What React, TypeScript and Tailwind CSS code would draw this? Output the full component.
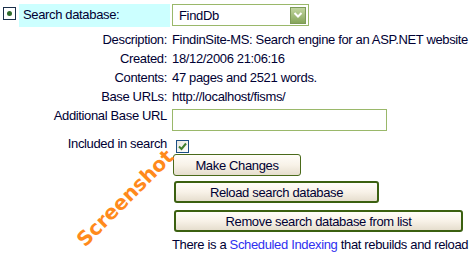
import React from "react";

function Chevron() {
  return (
    <svg width="10" height="8" viewBox="0 0 10 8">
      <path d="M1.5 2 L5 5.5 L8.5 2" stroke="#ffffff" strokeWidth="2" fill="none" />
    </svg>
  );
}

function Check() {
  return (
    <svg width="9" height="9" viewBox="0 0 9 9">
      <path d="M1 4.5 L3.5 7 L8 1.5" stroke="#3f7f2f" strokeWidth="2" fill="none" />
    </svg>
  );
}

export default function App() {
  const btnBase =
    "flex items-center justify-center h-[22px] rounded-[3px] bg-gradient-to-b from-[#fffdf9] via-[#f8f2e8] to-[#e6dece] text-[13px] text-[#000033] leading-none";
  return (
    <div
      className="relative w-[470px] h-[260px] bg-white overflow-hidden text-[13px] tracking-[-0.35px] text-[#000033]"
      style={{ fontFamily: '"Liberation Sans", Arial, sans-serif' }}
    >
      {/* top row */}
      <div className="flex items-start pt-[4px]">
        <div className="ml-[3px] mt-[3px] w-[13px] h-[13px] border border-[#1b2f4a] bg-white flex items-center justify-center">
          <div className="w-[5px] h-[5px] rounded-full bg-[#2e6a2a]" />
        </div>
        <div className="ml-[3px] w-[151px] h-[23px] bg-[#ccffff] pl-[4px] leading-[22px]">
          Search database:
        </div>
        <div className="ml-[2px] w-[137px] h-[22px] border border-[#9ab86a] bg-white flex items-center justify-between pl-[6px] pr-[2px]">
          <span className="leading-none">FindDb</span>
          <div className="w-[16px] h-[17px] border border-[#7d9a58] bg-gradient-to-b from-[#c2d6a0] to-[#86a55a] flex items-center justify-center">
            <Chevron />
          </div>
        </div>
      </div>

      {/* details grid */}
      <div className="grid grid-cols-[167px_1fr] gap-x-[5px] mt-[3px] leading-[19px]">
        <div className="text-right">Description:</div>
        <div className="whitespace-nowrap">FindinSite-MS: Search engine for an ASP.NET website</div>
        <div className="text-right">Created:</div>
        <div>18/12/2006 21:06:16</div>
        <div className="text-right">Contents:</div>
        <div>47 pages and 2521 words.</div>
        <div className="text-right">Base URLs:</div>
        <div>http://localhost/fisms/</div>
        <div className="text-right">Additional Base URL</div>
        <div className="pt-[3px]">
          <div className="w-[215px] h-[22px] border border-[#9ab86a] bg-white" />
        </div>
        <div className="text-right mt-[3px]">Included in search</div>
        <div className="mt-[3px] pt-[6px] pl-[4px]">
          <div className="w-[13px] h-[13px] border border-[#1c4f84] bg-gradient-to-br from-[#e8e8e0] to-[#ffffff] flex items-center justify-center">
            <Check />
          </div>
        </div>
        <div />
        <div className="flex flex-col items-start pt-[1px]">
          <div className={`${btnBase} ml-[1px] w-[128px] border border-[#4a6a1a]`}>Make Changes</div>
          <div className={`${btnBase} ml-[2px] mt-[5px] w-[205px] border-2 border-[#3b6010]`}>Reload search database</div>
          <div className={`${btnBase} ml-[2px] mt-[7px] w-[289px] border-2 border-[#3b6010]`}>Remove search database from list</div>
          <div className="mt-[3px] whitespace-nowrap">
            There is a <span className="text-[#2f2ff0]">Scheduled Indexing</span> that rebuilds and reload
          </div>
        </div>
      </div>

      {/* watermark */}
      <div
        className="absolute left-[125px] top-[198px] -translate-x-1/2 -translate-y-1/2 -rotate-45 text-[20px] font-bold text-[#ff8a1c] whitespace-nowrap leading-none tracking-normal"
        style={{ fontFamily: '"DejaVu Sans", Verdana, sans-serif' }}
      >
        Screenshot
      </div>
    </div>
  );
}
